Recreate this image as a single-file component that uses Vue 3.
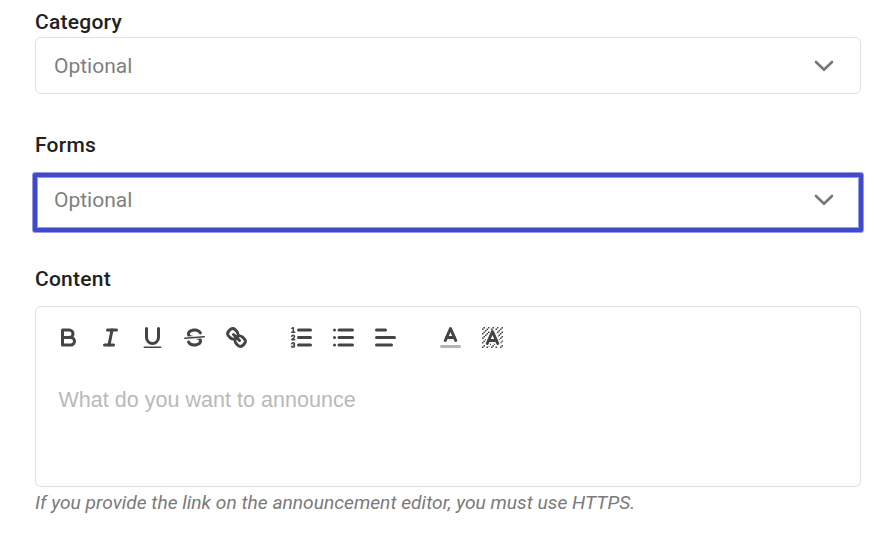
<template>
  <main class="announcement-form">
    <section class="field">
      <label class="field-label">Category</label>
      <button class="select" type="button">
        <span class="select-value">Optional</span>
        <svg class="chevron" viewBox="0 0 20 12"><path d="M2 2l8 7.6L18 2" /></svg>
      </button>
    </section>

    <section class="field forms">
      <label class="field-label">Forms</label>
      <button class="select highlighted" type="button">
        <span class="select-value">Optional</span>
        <svg class="chevron" viewBox="0 0 20 12"><path d="M2 2l8 7.6L18 2" /></svg>
      </button>
    </section>

    <section class="field content">
      <label class="field-label">Content</label>
      <div class="editor">
        <div class="toolbar">
          <span v-for="(group, index) in toolbar" :key="index" class="formats">
            <button v-for="tool in group" :key="tool.name" type="button" :aria-label="tool.name">
              <svg viewBox="0 0 18 18">
                <path v-for="d in tool.stroke" :key="d" class="stroke" :d="d" />
                <path v-for="d in tool.thin" :key="d" class="stroke thin" :d="d" />
                <path v-for="d in tool.fill" :key="d" class="fill" :d="d" />
                <path v-for="d in tool.faded" :key="d" class="stroke faded" :d="d" />
              </svg>
            </button>
          </span>
        </div>
        <div class="placeholder">What do you want to announce</div>
      </div>
      <p class="hint">If you provide the link on the announcement editor, you must use HTTPS.</p>
    </section>
  </main>
</template>

<script setup>
// [y, ...x] of each hatch square behind the background color letter
const hatch = [
  [2, 3, 6, 9, 12, 15],
  [3, 2, 5, 8, 11, 14],
  [4, 4, 13],
  [5, 3, 6, 12, 15],
  [6, 2, 5, 14],
  [7, 4, 13],
  [8, 3, 15],
  [9, 2, 14],
  [11, 3, 15],
  [12, 2],
  [14, 3, 9, 15],
  [15, 2, 5, 8, 11, 14],
]

const hatchPath = hatch
  .flatMap(([y, ...xs]) => xs.map((x) => `M${x},${y}h1v1h-1z`))
  .join('')

const toolbar = [
  [
    {
      name: 'bold',
      stroke: [
        'M5,4H9.5A2.5,2.5,0,0,1,12,6.5v0A2.5,2.5,0,0,1,9.5,9H5V4Z',
        'M5,9h5.5A2.5,2.5,0,0,1,13,11.5v0A2.5,2.5,0,0,1,10.5,14H5V9Z',
      ],
    },
    { name: 'italic', stroke: ['M7,4H13', 'M5,14H11', 'M8,14L10,4'] },
    {
      name: 'underline',
      stroke: ['M5,3V9a4.012,4.012,0,0,0,4,4H9a4.012,4.012,0,0,0,4-4V3'],
      fill: ['M3.5,15h11a.5,.5,0,0,1,0,1h-11a.5,.5,0,0,1,0-1Z'],
    },
    {
      name: 'strike',
      thin: ['M15.5,8.5L2.5,9.5'],
      fill: [
        'M9.007,8C6.542,7.791,6,7.519,6,6.5,6,5.792,7.283,5,9,5c1.571,0,2.765.679,2.969,1.309a1,1,0,0,0,1.9-.617C13.356,4.106,11.354,3,9,3,6.2,3,4,4.538,4,6.5a3.2,3.2,0,0,0,.5,1.843Z',
        'M8.984,10C11.457,10.208,12,10.479,12,11.5c0,.708-1.283,1.5-3,1.5-1.571,0-2.765-.679-2.969-1.309a1,1,0,1,0-1.9.617C4.644,13.894,6.646,15,9,15c2.8,0,5-1.538,5-3.5a3.2,3.2,0,0,0-.5-1.843Z',
      ],
    },
    {
      name: 'link',
      stroke: [
        'M7,7L11,11',
        'M8.9,4.577a3.476,3.476,0,0,1,.36,4.679A3.476,3.476,0,0,1,4.577,8.9C3.185,7.5,2.035,6.4,4.217,4.217S7.5,3.185,8.9,4.577Z',
        'M13.423,9.1a3.476,3.476,0,0,0-4.679-.36,3.476,3.476,0,0,0,.36,4.679c1.392,1.392,2.5,2.542,4.679.36S14.815,10.5,13.423,9.1Z',
      ],
    },
  ],
  [
    {
      name: 'ordered list',
      stroke: ['M7,4H15', 'M7,9H15', 'M7,14H15'],
      thin: [
        'M2.5,5.5H4.5',
        'M4.5,10.5h-2c0-.234,1.85-1.076,1.85-2.234A0.959,0.959,0,0,0,2.5,8.156',
        'M2.5,14.846a0.959,0.959,0,0,0,1.85-.109A0.7,0.7,0,0,0,3.75,14a0.688,0.688,0,0,0,.6-0.736,0.959,0.959,0,0,0-1.85-.109',
      ],
      fill: ['M3.5,6A0.5,0.5,0,0,1,3,5.5V3.085l-0.276.138A0.5,0.5,0,0,1,2.053,3c-0.124-.247-0.023-0.324.224-0.447l1-.5A0.5,0.5,0,0,1,4,2.5v3A0.5,0.5,0,0,1,3.5,6Z'],
    },
    {
      name: 'bullet list',
      stroke: ['M6,4H15', 'M6,9H15', 'M6,14H15', 'M3,4H3', 'M3,9H3', 'M3,14H3'],
    },
    { name: 'align', stroke: ['M3,4H9', 'M3,9H15', 'M3,14H13'] },
  ],
  [
    {
      name: 'text color',
      stroke: ['M5.5,11L9,3L12.5,11', 'M11.63,9H6.38'],
      faded: ['M3,15H15'],
    },
    {
      name: 'background color',
      stroke: ['M5.5,13L9,5L12.5,13', 'M11.63,11H6.38'],
      fill: [
        hatchPath,
        'M11,4.582V4h-.292ZM7,4.582L7.292,4H7ZM12,6.868V6h-.38ZM4.63,10H4v1h.192ZM13.37,10l.438,1H14V10ZM12.933,9H13V8h-.505ZM14.245,12l.253,1H15V12ZM8,13H7.683l-.475,1H8ZM10,13h.317l.475,1H10ZM6,14.926V15H7v-.684Z',
      ],
    },
  ],
]
</script>

<style>
body {
  margin: 0;
  background: #fff;
}
</style>

<style scoped>
.announcement-form {
  box-sizing: border-box;
  height: 533px;
  padding: 7px 29px 0 35px;
  overflow: hidden;
  font-family: Roboto, sans-serif;
}

.field {
  display: flex;
  flex-direction: column;
}

.field-label {
  height: 30px;
  line-height: 30px;
  font-size: 21px;
  font-weight: 500;
  letter-spacing: 0.25px;
  color: #212121;
}

.forms {
  margin-top: 36px;
}

.forms .field-label {
  margin-bottom: 13px;
}

.content {
  margin-top: 32px;
}

.content .field-label {
  margin-bottom: 12px;
}

.select {
  display: flex;
  align-items: center;
  justify-content: space-between;
  box-sizing: border-box;
  height: 57px;
  padding: 0 26px 0 18px;
  border: 1px solid #e0e0e0;
  border-radius: 6px;
  background: #fff;
  font: 400 21px Roboto, sans-serif;
  color: #7f7f7f;
}

.select.highlighted {
  height: 59px;
  margin: 0 -2px;
  padding: 0 25px 5px 17px;
  border: 4px solid #4048cc;
  border-radius: 2px;
  box-shadow: 0 0 0 1px rgba(64, 72, 204, 0.55), inset 0 0 0 1px rgba(64, 72, 204, 0.55);
}

.chevron {
  width: 20px;
  height: 12px;
}

.chevron path {
  fill: none;
  stroke: #757575;
  stroke-width: 2.6;
  stroke-linecap: round;
}

.editor {
  box-sizing: border-box;
  height: 181px;
  border: 1px solid #e0e0e0;
  border-radius: 6px;
}

.toolbar {
  display: flex;
  gap: 23px;
  padding: 12px 11.4px;
}

.formats {
  display: flex;
}

.formats button {
  width: 42px;
  height: 36px;
  padding: 4.5px 7.5px;
  border: 0;
  background: none;
}

.formats svg {
  display: block;
  width: 27px;
  height: 27px;
}

.stroke {
  fill: none;
  stroke: #444;
  stroke-width: 2;
  stroke-linecap: round;
  stroke-linejoin: round;
}

.thin {
  stroke-width: 1;
}

.faded {
  opacity: 0.4;
}

.fill {
  fill: #444;
}

.placeholder {
  padding: 19px 22.5px;
  font: 21.5px/28px "Liberation Sans", Arial, sans-serif;
  letter-spacing: 0.03px;
  color: #b9b9b9;
}

.hint {
  margin: 3px 0 0;
  font-size: 19.2px;
  font-style: italic;
  line-height: 26px;
  letter-spacing: 0.01px;
  color: #7a7a7a;
}
</style>
